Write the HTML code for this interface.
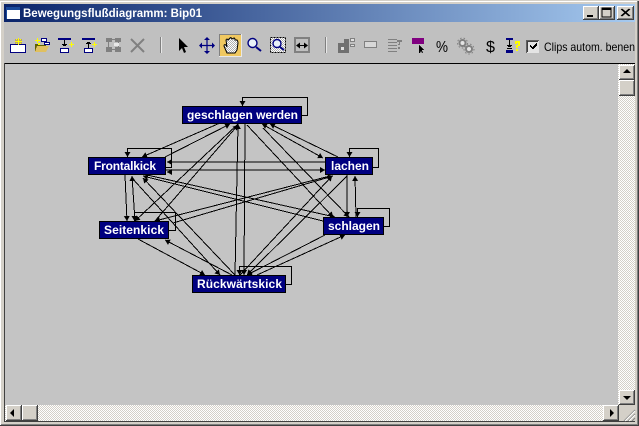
<!DOCTYPE html>
<html><head><meta charset="utf-8"><style>
html,body{margin:0;padding:0;width:639px;height:426px;overflow:hidden;background:#d4d0c8}
svg{display:block}
text{font-family:"Liberation Sans",sans-serif}
</style></head><body>
<svg width="639" height="426" viewBox="0 0 639 426" xmlns="http://www.w3.org/2000/svg">
<defs>
<linearGradient id="tg" x1="0" x2="1" y1="0" y2="0"><stop offset="0" stop-color="#0a246a"/><stop offset="1" stop-color="#a6caf0"/></linearGradient>
<pattern id="dith" width="2" height="2" patternUnits="userSpaceOnUse"><rect width="2" height="2" fill="#fff"/><rect width="1" height="1" fill="#d4d0c8"/><rect x="1" y="1" width="1" height="1" fill="#d4d0c8"/></pattern>
<pattern id="hand" width="2" height="2" patternUnits="userSpaceOnUse"><rect width="2" height="2" fill="#fff"/><rect width="1" height="1" fill="#b0b0b0"/><rect x="1" y="1" width="1" height="1" fill="#b0b0b0"/></pattern>
<marker id="a" markerUnits="userSpaceOnUse" markerWidth="7" markerHeight="7" refX="5" refY="3" orient="auto"><path d="M0 0L5 3L0 6Z" fill="#000"/></marker>
<symbol id="btn" viewBox="0 0 16 15" width="16" height="15" preserveAspectRatio="none">
<rect width="16" height="15" fill="#404040"/><rect width="15" height="14" fill="#fff"/><rect x="1" y="1" width="14" height="13" fill="#808080"/><rect x="1" y="1" width="13" height="12" fill="#d4d0c8"/>
</symbol>
</defs>

<!-- frame -->
<rect width="639" height="426" fill="#404040"/>
<rect width="638" height="425" fill="#fff"/>
<rect x="1" y="1" width="637" height="424" fill="#808080"/>
<rect x="1" y="1" width="636" height="423" fill="#d4d0c8"/>
<rect y="0" width="639" height="1" fill="#d4d0c8"/>
<rect x="1" y="1" width="636" height="1" fill="#fff"/>
<rect x="4" y="4" width="631" height="18" fill="url(#tg)"/>
<rect x="4" y="22" width="631" height="41" fill="#c0c0c0"/>

<!-- title -->
<g shape-rendering="crispEdges">
<rect x="6" y="7" width="14" height="12" fill="#fff"/>
<rect x="6" y="7" width="14" height="3" fill="#1a4a9a"/>
<rect x="6" y="7" width="1" height="12" fill="#1a4a9a"/>
</g>
<text x="23" y="17" font-size="12" font-weight="bold" fill="#fff" textLength="179" lengthAdjust="spacingAndGlyphs">Bewegungsflußdiagramm: Bip01</text>
<g shape-rendering="crispEdges">
<use href="#btn" x="583" y="6" width="16" height="14"/>
<use href="#btn" x="599" y="6" width="16" height="14"/>
<use href="#btn" x="617" y="6" width="17" height="14"/>
<rect x="587" y="15" width="6" height="2" fill="#000"/>
<rect x="602" y="8" width="9" height="9" fill="none" stroke="#000"/>
<rect x="602" y="8" width="9" height="2" fill="#000"/>
</g>
<path d="M621 9L629 16M622 9L630 16M629 9L621 16M630 9L622 16" stroke="#000" stroke-width="1" fill="none"/>

<!-- toolbar icons -->
<g shape-rendering="crispEdges">
<!-- new -->
<rect x="10.500" y="44.500" width="15" height="8" fill="#fff" stroke="#000080"/>
<path d="M15 39h7v5h-7z" fill="#b8a070"/>
<path d="M18 38h1v7h-1zM15 41h7v1h-7zM16 39h1v1h-1zM20 39h1v1h-1zM16 43h1v1h-1zM20 43h1v1h-1z" fill="#ffff00"/>
<!-- open -->
<path d="M35 44h3l1 1h7v7H35z" fill="#606000"/>
<path d="M37 46h12l-3 6H35z" fill="#e0c060"/>
<path d="M37 38h1v5h-1zM35 40h5v1h-5z" fill="#ffff00"/>
<rect x="38" y="43" width="2" height="2" fill="#ffff00"/>
<rect x="41.500" y="38.500" width="5" height="3" fill="#fff" stroke="#000080"/>
<rect x="44.500" y="42.500" width="5" height="2" fill="#fff" stroke="#000080"/>
<!-- flow 3 -->
<rect x="58" y="38" width="13" height="2" fill="#000080"/>
<rect x="64" y="40" width="1" height="6" fill="#000"/>
<path d="M62 44h5v1h-1v1h-3v-1h-1z" fill="#000"/>
<rect x="60.500" y="48.500" width="8" height="4" fill="#fff" stroke="#000080"/>
<path d="M71 42h1v5h-1zM69 44h5v1h-5z" fill="#ffff00"/>
<!-- flow 4 -->
<rect x="82" y="38" width="13" height="2" fill="#000080"/>
<rect x="88" y="43" width="1" height="5" fill="#000"/>
<path d="M86 44h5v-1h-1v-1h-3v1h-1z" fill="#000"/>
<rect x="84.500" y="48.500" width="8" height="4" fill="#fff" stroke="#000080"/>
<path d="M94 42h1v5h-1zM92 44h5v1h-5z" fill="#ffff00"/>
<!-- gray 5 -->
<path d="M106 38h6v4h-6zM115 38h6v4h-6zM106 47h6v5h-6zM115 47h6v5h-6z" fill="#808080"/>
<path d="M112 39h3v1h-3zM112 49h3v1h-3zM108 42h1v5h-1zM118 42h1v5h-1z" fill="#808080"/>
<path d="M114 43h5v3h-5z" fill="#e8e8e8"/>
<!-- sep -->
<rect x="160" y="37" width="1" height="16" fill="#808080"/>
<rect x="161" y="37" width="1" height="16" fill="#e8e8e8"/>
<!-- hand button -->
<rect x="219" y="34" width="22" height="23" fill="#f0c860"/>
<path d="M219 34h22v1h-22zM219 34h1v23h-1z" fill="#808080"/>
<path d="M219 56h23v1h-23zM241 34h1v23h-1z" fill="#e8e8e8"/>
<rect x="294.500" y="37.500" width="15" height="15" fill="none" stroke="#808080"/>
<rect x="295.500" y="38.500" width="13" height="13" fill="none" stroke="#808080"/>
<rect x="325" y="37" width="1" height="16" fill="#808080"/>
<rect x="326" y="37" width="1" height="16" fill="#e8e8e8"/>
<!-- gray group -->
<rect x="338" y="43" width="11" height="10" fill="#707070"/>
<rect x="341" y="47" width="3" height="3" fill="#e0e0e0"/>
<rect x="344" y="39" width="5" height="4" fill="#707070"/>
<rect x="350.500" y="38.500" width="4" height="3" fill="#e0e0e0" stroke="#808080"/>
<rect x="350.500" y="44.500" width="4" height="2" fill="#e0e0e0" stroke="#808080"/>
<rect x="364.500" y="41.500" width="12" height="6" fill="#d8d8d8" stroke="#808080"/>
<!-- list ? -->
<path d="M388 39h9v1h-9zM388 42h9v1h-9zM388 45h9v1h-9zM388 48h9v1h-9zM388 51h9v1h-9z" fill="#808080"/>
<path d="M397 40h5v2h-2v3h-2v-1h1v-2h-2z" fill="#808080"/>
<rect x="398" y="47" width="2" height="2" fill="#808080"/>
<!-- purple -->
<rect x="412" y="38" width="12" height="6" fill="#800080"/>
<path d="M419 45v8h1l1-2 1 2h1l-1-3h2z" fill="#000"/>
<!-- I? -->
<rect x="506" y="38" width="7" height="2" fill="#000080"/>
<rect x="506" y="50" width="7" height="3" fill="#000080"/>
<rect x="509" y="40" width="1" height="7" fill="#000"/>
<path d="M507 45h5v1h-1v1h-3v-1h-1zM507 48h5v1h-5z" fill="#000"/>
<path d="M515 41h5v5h-2v2h-2v-3h2v-2h-1v1h-2z" fill="#ffff00"/>
<rect x="516" y="49" width="2" height="2" fill="#ffff00"/>
<!-- checkbox -->
<rect x="526" y="40" width="13" height="13" fill="#e4e4e4"/>
<path d="M526 40h13v1h-13zM526 40h1v13h-1z" fill="#606060"/>
<path d="M527 41h11v1h-11zM527 41h1v11h-1z" fill="#404040"/>
<path d="M530 45h1v1h1v1h1v-1h1v-1h1v-1h1v-1h1v3h-1v1h-1v1h-1v1h-2v-1h-1v-1h-1z" fill="#000"/>
</g>
<!-- gears -->
<circle cx="462.500" cy="43" r="3" fill="#e4e4e4" stroke="#808080" stroke-width="2"/>
<circle cx="469" cy="49" r="3" fill="#e4e4e4" stroke="#808080" stroke-width="2"/>
<circle cx="462.500" cy="43" r="5" fill="none" stroke="#808080" stroke-width="1" stroke-dasharray="1.500 2"/>
<circle cx="469" cy="49" r="5" fill="none" stroke="#808080" stroke-width="1" stroke-dasharray="1.500 2"/>
<!-- gray X -->
<path d="M131 39L144 52M144 39L131 52" stroke="#808080" stroke-width="2" fill="none"/>
<!-- cursor -->
<path d="M179 38V51L182 48L184 53L186 52L184 47H188Z" fill="#000"/>
<!-- move -->
<path d="M200 45.500H214M207 38V53" stroke="#000080" stroke-width="1.200"/>
<path d="M207 37l-3 3h6zM207 54l-3-3h6zM199 45.500l3-3v6zM215 45.500l-3-3v6z" fill="#000080"/>
<!-- hand -->
<path d="M227 53L224 46Q224 44 226 45L227 47L226 40Q227 38 228 40L230 38Q231 37 232 39L234 38Q235 38 235 40L237 40Q238 41 238 43L237 50L235 53Z" fill="url(#hand)" stroke="#000" stroke-width="1"/>
<!-- magnifier -->
<circle cx="252.500" cy="43" r="4.500" fill="#e8f0f8" stroke="#000080" stroke-width="1.400"/>
<path d="M256 47L261 51" stroke="#000080" stroke-width="2"/>
<!-- zoom region -->
<rect x="270.500" y="37.500" width="15" height="15" fill="url(#hand)" stroke="#000" stroke-dasharray="2 1"/>
<circle cx="277" cy="43.500" r="4" fill="#e8f0f8" stroke="#000080" stroke-width="1.400"/>
<path d="M280 47L284 50" stroke="#000080" stroke-width="2"/>
<!-- fit -->
<path d="M297 45.500H307" stroke="#000" stroke-width="1"/>
<path d="M296 45.500l4-3v6zM308 45.500l-4-3v6z" fill="#000"/>
<text x="436" y="52" font-size="16" fill="#000" textLength="12" lengthAdjust="spacingAndGlyphs">%</text>
<text x="486" y="52" font-size="16" fill="#000" textLength="9" lengthAdjust="spacingAndGlyphs">$</text>
<text x="544" y="51" font-size="12" fill="#000" textLength="91" lengthAdjust="spacingAndGlyphs">Clips autom. benen</text>

<!-- canvas -->
<g shape-rendering="crispEdges">
<rect x="4" y="63" width="631" height="358" fill="#d4d0c8"/>
<rect x="4" y="63" width="631" height="1" fill="#000"/>
<rect x="4" y="63" width="1" height="358" fill="#404040"/>
<rect x="5" y="64" width="613" height="341" fill="#c4c4c4"/>
<rect x="618" y="64" width="17" height="341" fill="url(#dith)"/>
<rect x="5" y="405" width="613" height="16" fill="url(#dith)"/>
<rect x="4" y="421" width="631" height="1" fill="#404040"/>
<use href="#btn" x="619" y="65" width="16" height="15"/>
<use href="#btn" x="619" y="80" width="16" height="16"/>
<use href="#btn" x="619" y="390" width="16" height="15"/>
<use href="#btn" x="6" y="405" width="16" height="16"/>
<use href="#btn" x="22" y="405" width="16" height="16"/>
<use href="#btn" x="603" y="405" width="16" height="16"/>
<rect x="619" y="405" width="16" height="16" fill="#d4d0c8"/>
</g>
<path d="M627 69l-4 4h8zM627 400l-4-4h8zM10 413l4-4v8zM614 413l-4-4v8z" fill="#000"/>
<path d="M624 421L635 410M628 421L635 414M632 421L635 418" stroke="#808080" stroke-width="1"/>
<path d="M625 421L635 411M629 421L635 415" stroke="#fff" stroke-width="1"/>

<!-- edges -->
<g stroke="#000" stroke-width="1" fill="none" shape-rendering="crispEdges" marker-end="url(#a)">
<path d="M220 123L142 157"/>
<path d="M165 157L230 124"/>
<path d="M238 124L135 221"/>
<path d="M155 221L238 125"/>
<path d="M245 124L244 275"/>
<path d="M235 275L238 124"/>
<path d="M325 162L167 162"/>
<path d="M166 170L325 170"/>
<path d="M172 172L167 172"/>
<path d="M147 175L335 217"/>
<path d="M323 221L143 176"/>
<path d="M125 175L127 221"/>
<path d="M135 221L132 176"/>
<path d="M132 178L220 275"/>
<path d="M235 275L143 178"/>
<path d="M138 239L205 275"/>
<path d="M232 275L165 240"/>
<path d="M173 223L333 176"/>
<path d="M330 176L155 221"/>
<path d="M240 275L332 176"/>
<path d="M347 176L247 275"/>
<path d="M247 125L333 217"/>
<path d="M263 128L349 217"/>
<path d="M266 126L262 124"/>
<path d="M262 124L323 158"/>
<path d="M338 157L270 124"/>
<path d="M347 175L347 217"/>
<path d="M356 217L355 176"/>
<path d="M325 235L247 275"/>
<path d="M257 275L345 235"/>
<!-- self loops -->
<path d="M302 115.500H307.500V97.500H242.500V106"/>
<path d="M166 167.500H171.500V148.500H127.500V157"/>
<path d="M373 167.500H378.500V148.500H349.500V157"/>
<path d="M169 230.500H175.500V212.500H134.500V221"/>
<path d="M384 226.500H389.500V208.500H357.500V217"/>
<path d="M286 284.500H291.500V266.500H239.500V275"/>
</g>

<!-- nodes -->
<g shape-rendering="crispEdges" fill="#000080" stroke="#000">
<rect x="182.500" y="106.500" width="119" height="17"/>
<rect x="88.500" y="157.500" width="77" height="17"/>
<rect x="325.500" y="157.500" width="47" height="17"/>
<rect x="99.500" y="221.500" width="69" height="17"/>
<rect x="323.500" y="217.500" width="60" height="17"/>
<rect x="192.500" y="275.500" width="93" height="17"/>
</g>
<g fill="#fff" font-size="12" font-weight="bold">
<text x="187" y="119" textLength="111" lengthAdjust="spacing">geschlagen werden</text>
<text x="94" y="170" textLength="62" lengthAdjust="spacing">Frontalkick</text>
<text x="331" y="170" textLength="38" lengthAdjust="spacing">lachen</text>
<text x="104" y="234" textLength="60" lengthAdjust="spacing">Seitenkick</text>
<text x="328" y="230" textLength="52" lengthAdjust="spacing">schlagen</text>
<text x="197" y="288" textLength="85" lengthAdjust="spacing">Rückwärtskick</text>
</g>
</svg>
</body></html>
